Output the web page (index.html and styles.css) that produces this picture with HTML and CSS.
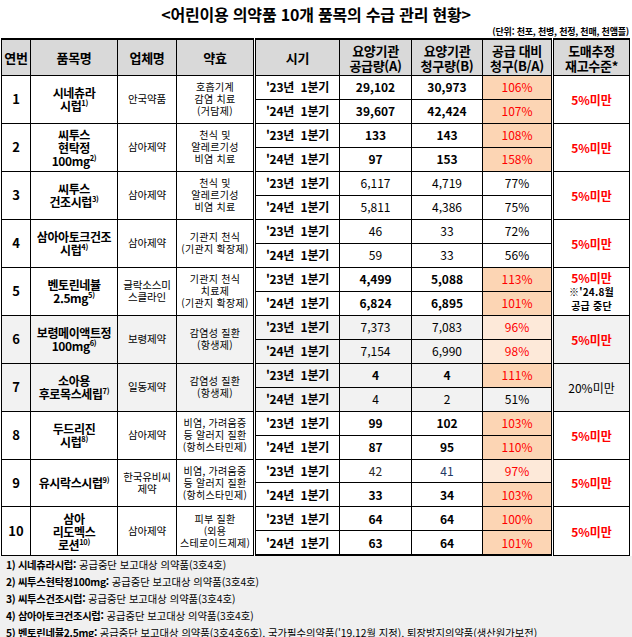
FILE: index.html
```html
<!DOCTYPE html>
<html lang="ko">
<head>
<meta charset="utf-8">
<link rel="stylesheet" href="styles.css">
</head>
<body>
<div class="page">
  <h1 class="title">&lt;어린이용 의약품 10개 품목의 수급 관리 현황&gt;</h1>
  <div class="unit">(단위: 천포, 천병, 천정, 천매, 천앰플)</div>
  <table class="grid">
    <colgroup>
      <col class="c1"><col class="c2"><col class="c3"><col class="c4"><col class="c5"><col class="c6"><col class="c7"><col class="c8"><col class="c9">
    </colgroup>
    <thead>
      <tr>
        <th>연번</th><th>품목명</th><th>업체명</th><th class="dbl">약효</th><th>시기</th>
        <th>요양기관<br>공급량(A)</th><th>요양기관<br>청구량(B)</th><th class="dbl">공급 대비<br>청구(B/A)</th><th>도매추정<br>재고수준*</th>
      </tr>
    </thead>
    <tbody>
      <tr>
        <td rowspan="2" class="no">1</td>
        <td rowspan="2" class="name">시네츄라<br>시럽<sup>1)</sup></td>
        <td rowspan="2" class="co">안국약품</td>
        <td rowspan="2" class="eff dbl">호흡기계<br>감염 치료<br>(거담제)</td>
        <td class="per">'23년&nbsp; 1분기</td><td class="num b">29,102</td><td class="num b">30,973</td><td class="pct hi dbl">106%</td>
        <td rowspan="2" class="stock red">5%미만</td>
      </tr>
      <tr>
        <td class="per">'24년&nbsp; 1분기</td><td class="num b">39,607</td><td class="num b">42,424</td><td class="pct hi dbl">107%</td>
      </tr>

      <tr>
        <td rowspan="2" class="no">2</td>
        <td rowspan="2" class="name">씨투스<br>현탁정<br>100mg<sup>2)</sup></td>
        <td rowspan="2" class="co">삼아제약</td>
        <td rowspan="2" class="eff dbl">천식 및<br>알레르기성<br>비염 치료</td>
        <td class="per">'23년&nbsp; 1분기</td><td class="num b">133</td><td class="num b">143</td><td class="pct hi dbl">108%</td>
        <td rowspan="2" class="stock red">5%미만</td>
      </tr>
      <tr>
        <td class="per">'24년&nbsp; 1분기</td><td class="num b">97</td><td class="num b">153</td><td class="pct hi dbl">158%</td>
      </tr>

      <tr>
        <td rowspan="2" class="no">3</td>
        <td rowspan="2" class="name">씨투스<br>건조시럽<sup>3)</sup></td>
        <td rowspan="2" class="co">삼아제약</td>
        <td rowspan="2" class="eff dbl">천식 및<br>알레르기성<br>비염 치료</td>
        <td class="per">'23년&nbsp; 1분기</td><td class="num">6,117</td><td class="num">4,719</td><td class="pct dbl">77%</td>
        <td rowspan="2" class="stock red">5%미만</td>
      </tr>
      <tr>
        <td class="per">'24년&nbsp; 1분기</td><td class="num">5,811</td><td class="num">4,386</td><td class="pct dbl">75%</td>
      </tr>

      <tr>
        <td rowspan="2" class="no">4</td>
        <td rowspan="2" class="name">삼아아토크건조<br>시럽<sup>4)</sup></td>
        <td rowspan="2" class="co">삼아제약</td>
        <td rowspan="2" class="eff dbl">기관지 천식<br>(기관지 확장제)</td>
        <td class="per">'23년&nbsp; 1분기</td><td class="num">46</td><td class="num">33</td><td class="pct dbl">72%</td>
        <td rowspan="2" class="stock red">5%미만</td>
      </tr>
      <tr>
        <td class="per">'24년&nbsp; 1분기</td><td class="num">59</td><td class="num">33</td><td class="pct dbl">56%</td>
      </tr>

      <tr>
        <td rowspan="2" class="no">5</td>
        <td rowspan="2" class="name">벤토린네뷸<br>2.5mg<sup>5)</sup></td>
        <td rowspan="2" class="co">글락소스미<br>스클라인</td>
        <td rowspan="2" class="eff dbl">기관지 천식<br>치료제<br>(기관지 확장제)</td>
        <td class="per">'23년&nbsp; 1분기</td><td class="num b">4,499</td><td class="num b">5,088</td><td class="pct hi dbl">113%</td>
        <td rowspan="2" class="stock"><span class="red">5%미만</span><br><span class="stop">※'24.8월<br>공급 중단</span></td>
      </tr>
      <tr>
        <td class="per">'24년&nbsp; 1분기</td><td class="num b">6,824</td><td class="num b">6,895</td><td class="pct hi dbl">101%</td>
      </tr>

      <tr class="alt">
        <td rowspan="2" class="no">6</td>
        <td rowspan="2" class="name">보령메이액트정<br>100mg<sup>6)</sup></td>
        <td rowspan="2" class="co">보령제약</td>
        <td rowspan="2" class="eff dbl">감염성 질환<br>(항생제)</td>
        <td class="per">'23년&nbsp; 1분기</td><td class="num">7,373</td><td class="num">7,083</td><td class="pct lt dbl red">96%</td>
        <td rowspan="2" class="stock red">5%미만</td>
      </tr>
      <tr class="alt">
        <td class="per">'24년&nbsp; 1분기</td><td class="num">7,154</td><td class="num">6,990</td><td class="pct lt dbl red">98%</td>
      </tr>

      <tr class="alt">
        <td rowspan="2" class="no">7</td>
        <td rowspan="2" class="name">소아용<br>후로목스세립<sup>7)</sup></td>
        <td rowspan="2" class="co">일동제약</td>
        <td rowspan="2" class="eff dbl">감염성 질환<br>(항생제)</td>
        <td class="per">'23년&nbsp; 1분기</td><td class="num b">4</td><td class="num b">4</td><td class="pct hi dbl">111%</td>
        <td rowspan="2" class="stock plain">20%미만</td>
      </tr>
      <tr class="alt">
        <td class="per">'24년&nbsp; 1분기</td><td class="num">4</td><td class="num">2</td><td class="pct dbl">51%</td>
      </tr>

      <tr>
        <td rowspan="2" class="no">8</td>
        <td rowspan="2" class="name">두드리진<br>시럽<sup>8)</sup></td>
        <td rowspan="2" class="co">삼아제약</td>
        <td rowspan="2" class="eff dbl">비염, 가려움증<br>등 알러지 질환<br>(항히스타민제)</td>
        <td class="per">'23년&nbsp; 1분기</td><td class="num b">99</td><td class="num b">102</td><td class="pct hi dbl">103%</td>
        <td rowspan="2" class="stock red">5%미만</td>
      </tr>
      <tr>
        <td class="per">'24년&nbsp; 1분기</td><td class="num b">87</td><td class="num b">95</td><td class="pct hi dbl">110%</td>
      </tr>

      <tr>
        <td rowspan="2" class="no">9</td>
        <td rowspan="2" class="name">유시락스시럽<sup>9)</sup></td>
        <td rowspan="2" class="co">한국유비씨<br>제약</td>
        <td rowspan="2" class="eff dbl">비염, 가려움증<br>등 알러지 질환<br>(항히스타민제)</td>
        <td class="per">'23년&nbsp; 1분기</td><td class="num dim">42</td><td class="num blue">41</td><td class="pct lt dbl red">97%</td>
        <td rowspan="2" class="stock red">5%미만</td>
      </tr>
      <tr>
        <td class="per">'24년&nbsp; 1분기</td><td class="num b">33</td><td class="num b">34</td><td class="pct hi dbl">103%</td>
      </tr>

      <tr>
        <td rowspan="2" class="no">10</td>
        <td rowspan="2" class="name">삼아<br>리도멕스<br>로션<sup>10)</sup></td>
        <td rowspan="2" class="co">삼아제약</td>
        <td rowspan="2" class="eff dbl">피부 질환<br>(외용<br>스테로이드제제)</td>
        <td class="per">'23년&nbsp; 1분기</td><td class="num b">64</td><td class="num b">64</td><td class="pct hi dbl">100%</td>
        <td rowspan="2" class="stock red">5%미만</td>
      </tr>
      <tr class="last">
        <td class="per">'24년&nbsp; 1분기</td><td class="num b">63</td><td class="num b">64</td><td class="pct hi dbl">101%</td>
      </tr>
    </tbody>
  </table>
  <div class="notes">
    <p><b>1) 시네츄라시럽:</b> 공급중단 보고대상 의약품(3호4호)</p>
    <p><b>2) 씨투스현탁정100mg:</b> 공급중단 보고대상 의약품(3호4호)</p>
    <p><b>3) 씨투스건조시럽:</b> 공급중단 보고대상 의약품(3호4호)</p>
    <p><b>4) 삼아아토크건조시럽:</b> 공급중단 보고대상 의약품(3호4호)</p>
    <p><b>5) 벤토린네뷸2.5mg:</b> 공급중단 보고대상 의약품(3호4호6호), 국가필수의약품('19.12월 지정), 퇴장방지의약품(생산원가보전)</p>
  </div>
</div>
</body>
</html>
```
FILE: styles.css
```css
html, body {
  margin: 0;
  padding: 0;
  background: #fff;
}
body {
  font-family: "Noto Sans CJK KR", "Noto Sans", sans-serif;
  color: #000;
}
.page {
  width: 632px;
  height: 637px;
  overflow: hidden;
  display: flex;
  flex-direction: column;
}
.title {
  margin: 0;
  height: 26px;
  line-height: 28px;
  font-size: 16px;
  font-weight: bold;
  text-align: center;
  letter-spacing: -0.2px;
}
.unit {
  height: 12px;
  line-height: 12px;
  font-size: 9px;
  font-weight: bold;
  text-align: right;
  padding-right: 3px;
  letter-spacing: -0.2px;
}
.grid {
  border-collapse: collapse;
  table-layout: fixed;
  width: 628px;
  margin-left: 1px;
  flex: none;
}
.c1 { width: 29px; }
.c2 { width: 87px; }
.c3 { width: 59px; }
.c4 { width: 78px; }
.c5 { width: 85px; }
.c6 { width: 72px; }
.c7 { width: 71px; }
.c8 { width: 70px; }
.c9 { width: 77px; }

.grid th, .grid td {
  border: 1px solid #000;
  padding: 0;
  text-align: center;
  vertical-align: middle;
  overflow: hidden;
  white-space: nowrap;
}
.grid th {
  height: 35px;
  background: #d9d9d9;
  font-size: 13px;
  font-weight: bold;
  line-height: 15px;
  border-top: 2px solid #000;
  letter-spacing: -0.3px;
}
.grid td {
  height: 22.98px;
  line-height: 12px;
}
.grid .dbl {
  border-right: 3px double #000;
}
.alt td {
  background: #f2f2f2;
}
.no {
  font-size: 13px;
  font-weight: bold;
}
.grid td.name {
  font-size: 12px;
  font-weight: bold;
  line-height: 13px;
  letter-spacing: -0.4px;
}
.name sup {
  font-size: 7.5px;
  line-height: 0;
  vertical-align: 5px;
  letter-spacing: -0.3px;
}
.co {
  font-size: 10.5px;
  letter-spacing: -0.2px;
}
.grid td.eff {
  font-size: 10px;
  line-height: 12px;
  letter-spacing: 0.3px;
}
.per {
  font-size: 12px;
  font-weight: bold;
  letter-spacing: -0.2px;
}
.num {
  font-size: 12px;
}
.num.b {
  font-weight: bold;
}
.num.dim {
  color: #262626;
}
.num.blue {
  color: #1f3864;
}
.pct {
  font-size: 12px;
}
.grid td.hi {
  background: #fcd5b4;
  color: #ff0000;
}
.grid td.lt {
  background: #fde9d9;
}
.red {
  color: #ff0000;
}
.grid td.stock {
  font-size: 12px;
  font-weight: bold;
  line-height: 13px;
}
.grid td.stock.plain {
  font-weight: normal;
}
.stop {
  font-size: 10px;
  color: #000;
  letter-spacing: 0.2px;
}
.last td {
  border-bottom: 2px solid #000;
}
.notes {
  flex: 1;
  background: #f0f0f0;
  padding: 0 0 0 6px;
}
.notes p {
  margin: 0;
  height: 17px;
  line-height: 17px;
  font-size: 10.3px;
  white-space: nowrap;
  letter-spacing: 0;
}
.notes b {
  letter-spacing: -0.3px;
}
```
